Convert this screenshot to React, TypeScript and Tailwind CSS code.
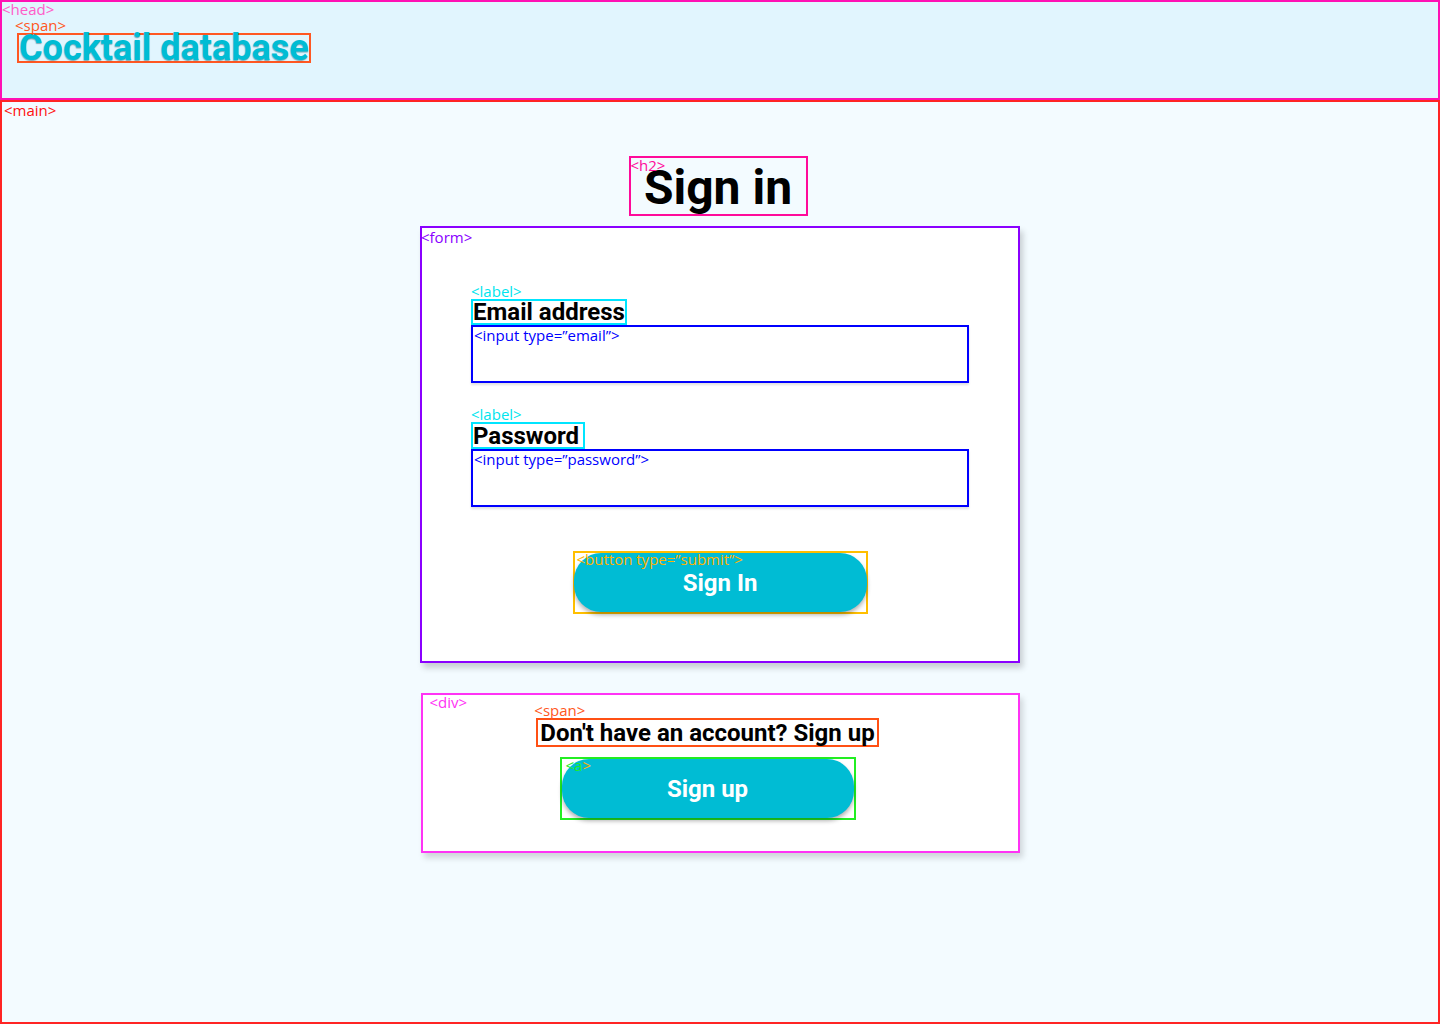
import type { ReactNode } from "react"

// Small annotation tag shown over each element box
function Tag({ className, children }: { className: string; children: ReactNode }) {
  return (
    <span
      className={
        "pointer-events-none absolute whitespace-nowrap font-['Open_Sans',sans-serif] text-[15px] font-normal leading-[15px] " +
        className
      }
    >
      {children}
    </span>
  )
}

function Field({ label, type, last }: { label: string; type: string; last?: boolean }) {
  return (
    <div className={last ? "mt-[39px] flex flex-col" : "flex flex-col"}>
      <label
        className={
          "relative flex items-center self-start border-2 border-[#00e5ff] text-[24px] font-bold leading-[22px] text-black " +
          (last ? "h-[27px] pr-[4px]" : "h-[26px]")
        }
      >
        <Tag className="-top-[17px] left-[-2px] text-[#00e5ee]">&lt;label&gt;</Tag>
        {label}
      </label>
      <div className="relative h-[58px] w-full border-2 border-[#0000ff] shadow-[0_2px_2px_rgba(0,0,0,0.12)]">
        <Tag className="left-[1px] top-[1px] text-[#0000ff]">&lt;input type=”{type}”&gt;</Tag>
        <input type={type} className="h-full w-full bg-transparent px-3 pt-4 outline-none" />
      </div>
    </div>
  )
}

export default function App() {
  return (
    <div className="min-h-screen bg-[#f3fbff] font-['Roboto',sans-serif]">
      <header className="relative h-[100px] border-2 border-[#ff10b4] bg-[#e1f5fe] pl-[15px] pt-[31px]">
        <Tag className="left-0 top-0 text-[#ff5cc8]">&lt;head&gt;</Tag>
        <span className="relative inline-flex h-[30px] items-center border-2 border-[#ff5722] text-[36px] font-bold leading-[26px] text-[#00bcd4] [text-shadow:0_1px_1px_rgba(0,80,100,0.45)]">
          <Tag className="-top-[17px] left-[-4px] text-[#ff5722] [text-shadow:none]">&lt;span&gt;</Tag>
          Cocktail database
        </span>
      </header>

      <main className="relative flex h-[924px] flex-col items-center border-2 border-[#ff2424] pt-[54px]">
        <Tag className="left-[2px] top-[1px] text-[#ff1010]">&lt;main&gt;</Tag>

        <h2 className="relative ml-[-4px] flex h-[60px] w-[179px] items-center justify-center border-2 border-[#ff0a9a] pt-[4px] text-[48px] font-bold leading-none text-black">
          <Tag className="left-0 top-[0px] text-[#ff0a9a]">&lt;h2&gt;</Tag>
          Sign in
        </h2>

        <form
          className="relative mt-[10px] flex h-[437px] w-[600px] flex-col border-2 border-[#8a00ff] bg-white px-[49px] pt-[71px] shadow-[3px_5px_6px_rgba(0,0,0,0.18)]"
          onSubmit={(e) => e.preventDefault()}
        >
          <Tag className="left-[-1px] top-[2px] text-[#8a00ff]">&lt;form&gt;</Tag>
          <Field label="Email address" type="email" />
          <Field label="Password" type="password" last />

          <div className="relative mx-auto mt-[44px] h-[63px] w-[295px] border-2 border-[#ffbf00]">
            <button
              type="submit"
              className="-ml-[1px] h-full w-[calc(100%+2px)] rounded-[27px] bg-[#00bcd4] text-[24px] font-bold text-white shadow-[0_3px_4px_rgba(0,0,0,0.3)]"
            >
              Sign In
            </button>
            <Tag className="left-[2px] top-[-1px] text-[#ffb300]">&lt;button type=”submit”&gt;</Tag>
          </div>
        </form>

        <div className="relative mt-[30px] flex h-[160px] w-[599px] flex-col items-center border-2 border-[#ff33f5] bg-white pr-[25px] pt-[23px] shadow-[3px_5px_6px_rgba(0,0,0,0.15)]">
          <Tag className="left-[7px] top-[0px] text-[#ff33f5]">&lt;div&gt;</Tag>
          <span className="relative flex h-[29px] items-center border-2 border-[#ff5014] px-[2px] text-[24px] font-bold leading-[22px] text-black">
            <Tag className="-top-[17px] left-[-4px] text-[#ff5722]">&lt;span&gt;</Tag>
            Don't have an account? Sign up
          </span>
          <div className="relative mt-[10px] h-[63px] w-[296px] border-2 border-[#22ee22]">
            <a
              href="#"
              className="flex h-full w-full items-center justify-center rounded-[27px] bg-[#00bcd4] text-[24px] font-bold text-white shadow-[0_3px_4px_rgba(0,0,0,0.3)]"
            >
              Sign up
            </a>
            <Tag className="left-[4px] top-[-1px] text-[#22ee22]">
              &lt;a<span className="text-[#ffb300]">&gt;</span>
            </Tag>
          </div>
        </div>
      </main>
    </div>
  )
}
